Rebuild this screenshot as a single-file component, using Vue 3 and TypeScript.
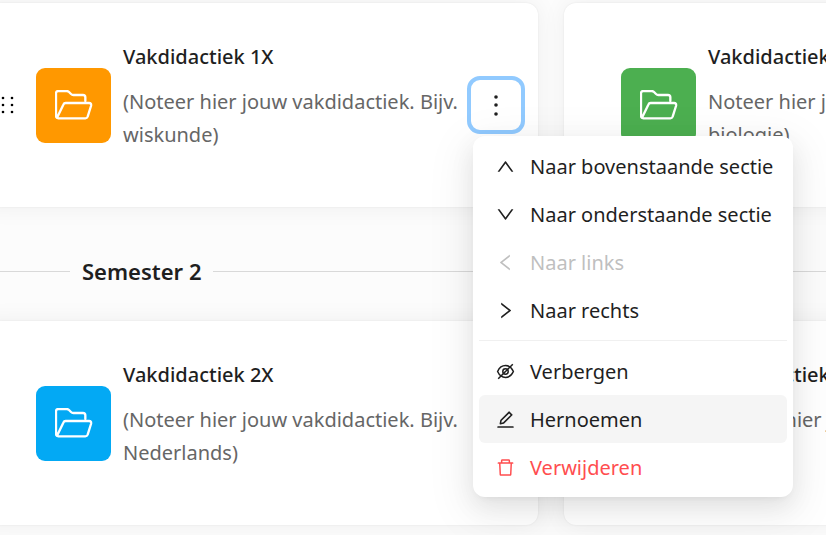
<script setup lang="ts">
interface Course {
  title: string
  description: string
  color: string
  menuOpen?: boolean
}

interface MenuEntry {
  label: string
  icon: string
  state?: 'disabled' | 'active' | 'danger'
}

const firstSemester: Course[] = [
  {
    title: 'Vakdidactiek 1X',
    description: '(Noteer hier jouw vakdidactiek. Bijv. wiskunde)',
    color: '#ff9800',
    menuOpen: true,
  },
  {
    title: 'Vakdidactiek 1Y',
    description: 'Noteer hier jouw vakdidactiek. Bijv. biologie)',
    color: '#4caf50',
  },
]

const secondSemester: Course[] = [
  {
    title: 'Vakdidactiek 2X',
    description: '(Noteer hier jouw vakdidactiek. Bijv. Nederlands)',
    color: '#03a9f4',
  },
  {
    title: 'Vakdidactiek 2Y',
    description: '(Noteer hier jouw vakdidactiek. Bijv. Frans)',
    color: '#e91e63',
  },
]

const sections = [
  { heading: '', courses: firstSemester },
  { heading: 'Semester 2', courses: secondSemester },
]

const icons = {
  up: 'M890.5 755.3L537.9 269.2c-12.8-17.6-39-17.6-51.7 0L133.5 755.3A8 8 0 00140 768h75c5.1 0 9.9-2.5 12.9-6.6L512 369.8l284.1 391.6c3 4.1 7.8 6.6 12.9 6.6h75c6.5 0 10.3-7.4 6.5-12.7z',
  down: 'M884 256h-75c-5.1 0-9.9 2.5-12.9 6.6L512 654.2 227.9 262.6c-3-4.1-7.8-6.6-12.9-6.6h-75c-6.5 0-10.3 7.4-6.5 12.7l352.6 486.1c12.8 17.6 39 17.6 51.7 0l352.6-486.1c3.9-5.3.1-12.7-6.4-12.7z',
  left: 'M724 218.3V141c0-6.7-7.7-10.4-12.9-6.3L260.3 486.8a31.86 31.86 0 000 50.3l450.8 352.1c5.3 4.1 12.9.4 12.9-6.3v-77.3c0-4.9-2.3-9.6-6.1-12.6l-360-281 360-281.1c3.8-3 6.1-7.7 6.1-12.6z',
  right: 'M765.7 486.8L314.9 134.7A7.97 7.97 0 00302 141v77.3c0 4.9 2.3 9.6 6.1 12.6l360 281.1-360 281.1c-3.9 3-6.1 7.7-6.1 12.6V883c0 6.7 7.7 10.4 12.9 6.3l450.8-352.1a31.96 31.96 0 000-50.4z',
  edit: 'M257.7 752c2 0 4-.2 6-.5L431.9 722c2-.4 3.9-1.3 5.3-2.8l423.9-423.9a9.96 9.96 0 000-14.1L694.9 114.9c-1.9-1.9-4.4-2.9-7.1-2.9s-5.2 1-7.1 2.9L256.8 538.8c-1.5 1.5-2.4 3.3-2.8 5.3l-29.5 168.2a33.5 33.5 0 009.4 29.8c6.6 6.4 14.9 9.9 23.8 9.9zm67.4-174.4L687.8 215l73.3 73.3-362.7 362.6-88.9 15.7 15.6-89zM880 836H144c-17.7 0-32 14.3-32 32v36c0 4.4 3.6 8 8 8h784c4.4 0 8-3.6 8-8v-36c0-17.7-14.3-32-32-32z',
  trash: 'M360 184h-8c4.4 0 8-3.6 8-8v8h304v-8c0 4.4 3.6 8 8 8h-8v72h72v-80c0-35.3-28.7-64-64-64H352c-35.3 0-64 28.7-64 64v80h72v-72zm504 72H160c-17.7 0-32 14.3-32 32v32c0 4.4 3.6 8 8 8h60.4l24.7 523c1.6 34.1 29.8 61 63.9 61h454c34.2 0 62.3-26.8 63.9-61l24.7-523H888c4.4 0 8-3.6 8-8v-32c0-17.7-14.3-32-32-32zM731.3 840H292.7l-24.2-512h487l-24.2 512z',
} as Record<string, string>

const menuGroups: MenuEntry[][] = [
  [
    { label: 'Naar bovenstaande sectie', icon: 'up' },
    { label: 'Naar onderstaande sectie', icon: 'down' },
    { label: 'Naar links', icon: 'left', state: 'disabled' },
    { label: 'Naar rechts', icon: 'right' },
  ],
  [
    { label: 'Verbergen', icon: 'hide' },
    { label: 'Hernoemen', icon: 'edit', state: 'active' },
    { label: 'Verwijderen', icon: 'trash', state: 'danger' },
  ],
]
</script>

<template>
  <div class="viewport">
    <main class="board">
      <section v-for="section in sections" :key="section.heading">
        <h2 v-if="section.heading" class="divider">{{ section.heading }}</h2>
        <div class="cards">
          <article v-for="course in section.courses" :key="course.title" class="card">
            <svg class="handle" :class="{ shown: course.menuOpen }" viewBox="0 0 15 20" aria-hidden="true">
              <g v-for="y in [3, 10, 17]" :key="y">
                <circle cx="3" :cy="y" r="1.3" />
                <circle cx="12" :cy="y" r="1.3" />
              </g>
            </svg>
            <span class="tile" :style="{ background: course.color }">
              <svg class="folder" viewBox="0 0 114 90" aria-hidden="true">
                <path d="M91 32V22Q91 15 84 15H55Q51 15 48 12L42 6Q39 3 35 3H10Q3 3 3 10V78Q3 85 10 85H91Q96 85 98 80L108 48Q110 39 102 39H32Q27 39 25 44L6 83" />
              </svg>
            </span>
            <div class="text">
              <h3>{{ course.title }}</h3>
              <p>{{ course.description }}</p>
            </div>
            <div class="actions">
              <button class="more" :class="{ focused: course.menuOpen }" type="button" aria-label="Meer">
                <svg viewBox="0 0 32 32" aria-hidden="true">
                  <circle v-for="y in [8, 16, 25]" :key="y" cx="16" :cy="y" r="1.8" />
                </svg>
              </button>
              <div v-if="course.menuOpen" class="menu" role="menu">
                <div v-for="(group, index) in menuGroups" :key="index" class="group">
                  <button
                    v-for="entry in group"
                    :key="entry.label"
                    type="button"
                    role="menuitem"
                    class="entry"
                    :class="entry.state"
                    :disabled="entry.state === 'disabled'"
                  >
                    <svg v-if="entry.icon === 'hide'" class="eye" viewBox="0 0 21 21" aria-hidden="true">
                      <path d="M2.6 10.5C4.5 6.3 7 4.6 10.5 4.6S16.5 6.3 18.4 10.5C16.5 14.7 14 16.4 10.5 16.4S4.5 14.7 2.6 10.5Z" />
                      <circle cx="10.5" cy="10.5" r="2.700" />
                      <path d="M3.200 17.800L17.800 3.200" />
                    </svg>
                    <svg v-else viewBox="0 0 1024 1024" aria-hidden="true">
                      <path :d="icons[entry.icon]" />
                    </svg>
                    <span>{{ entry.label }}</span>
                  </button>
                </div>
              </div>
            </div>
          </article>
        </div>
      </section>
    </main>
  </div>
</template>

<style>
body {
  background: #fcfcfc;
}
</style>

<style scoped>
.viewport {
  overflow: hidden;
}

.board {
  margin: 0 -297px 0 -21px;
  padding: 3px 0 10px;
  font-family: "Noto Sans", sans-serif;
  font-size: 20px;
  color: #1f1f1f;
}

.cards {
  display: grid;
  grid-template-columns: repeat(2, minmax(0, 1fr));
  gap: 26px;
}

.card {
  display: flex;
  align-items: center;
  padding: 36px 17px 36px 21px;
  border-radius: 12px;
  background: #fff;
  box-shadow: 0 0 2px rgba(0, 0, 0, 0.08), 0 0 24px rgba(0, 0, 0, 0.06);
}

.handle {
  flex: none;
  width: 15px;
  height: 20px;
  margin-right: 21px;
  visibility: hidden;
}

.handle.shown {
  visibility: visible;
}

.tile {
  display: flex;
  flex: none;
  align-items: center;
  justify-content: center;
  width: 75px;
  height: 75px;
  border-radius: 9px;
}

.folder {
  width: 38px;
  height: 30px;
  fill: none;
  stroke: #fff;
  stroke-width: 7;
  stroke-linejoin: round;
  stroke-linecap: round;
}

.text {
  flex: 1;
  min-width: 0;
  margin: 1px 12px 20px;
}

h3 {
  margin: 0 0 12px;
  font-size: 20px;
  font-weight: 500;
  line-height: 33px;
}

p {
  margin: 0;
  line-height: 33px;
  color: #666;
}

.actions {
  position: relative;
  flex: none;
}

.more {
  display: flex;
  align-items: center;
  justify-content: center;
  width: 50px;
  height: 50px;
  padding: 0;
  border: 0;
  border-radius: 9px;
  background: transparent;
}

.more svg {
  width: 32px;
  height: 32px;
  fill: #1f1f1f;
}

.focused {
  outline: 4px solid #91caff;
}

.menu {
  position: absolute;
  z-index: 1;
  top: 100%;
  left: 2px;
  width: 308px;
  margin-top: 6px;
  padding: 6px;
  border-radius: 12px;
  background: #fff;
  box-shadow: 0 9px 24px rgba(0, 0, 0, 0.08), 0 4px 9px -6px rgba(0, 0, 0, 0.12), 0 12px 42px 12px rgba(0, 0, 0, 0.05);
}

.group + .group {
  margin-top: 6px;
  padding-top: 6px;
  border-top: 1px solid #f0f0f0;
}

.entry {
  display: flex;
  align-items: center;
  gap: 14px;
  width: 100%;
  height: 48px;
  padding: 0 16px;
  border: 0;
  border-radius: 6px;
  background: transparent;
  font: inherit;
  color: #1f1f1f;
  white-space: nowrap;
}

.entry svg {
  flex: none;
  width: 21px;
  height: 21px;
  fill: currentColor;
}

.entry .eye {
  fill: none;
  stroke: currentColor;
  stroke-width: 1.5;
}

.active {
  background: #f5f5f5;
}

.disabled {
  color: #bfbfbf;
}

.danger {
  color: #ff4d4f;
}

.divider {
  display: flex;
  align-items: center;
  gap: 12px;
  margin: 47px 0 33px;
  font-size: 22px;
  font-weight: 600;
  line-height: 34px;
}

.divider::before,
.divider::after {
  content: "";
  height: 1px;
  background: #d9d9d9;
}

.divider::before {
  width: 91px;
}

.divider::after {
  flex: 1;
}
</style>
